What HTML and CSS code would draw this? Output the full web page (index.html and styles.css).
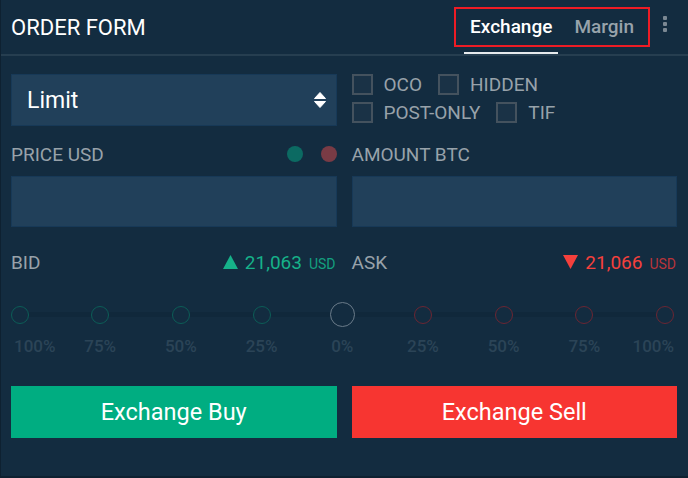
FILE: index.html
```html
<!DOCTYPE html>
<html lang="en">
<head>
  <meta charset="UTF-8">
  <meta name="viewport" content="width=device-width, initial-scale=1.0">
  <title>Order Form</title>
  <link rel="stylesheet" href="styles.css">
</head>
<body>
  <div class="panel">
    <header class="head">
      <h1 class="title">ORDER FORM</h1>
      <nav class="tabs">
        <span class="tab active">Exchange</span>
        <span class="tab">Margin</span>
      </nav>
      <span class="kebab"><i></i><i></i><i></i></span>
    </header>

    <div class="content">
      <!-- order type + flags -->
      <div class="row row-type">
        <div class="select">
          <span>Limit</span>
          <svg class="updown" width="12" height="16" viewBox="0 0 12 16">
            <path d="M6 0.5 L11.5 6.5 H0.5 Z" fill="#fff" stroke="#fff" stroke-linejoin="round"/>
            <path d="M0.5 9.5 H11.5 L6 15.5 Z" fill="#fff" stroke="#fff" stroke-linejoin="round"/>
          </svg>
        </div>
        <div class="flags">
          <div class="flag-line">
            <label class="flag"><span class="box"></span>OCO</label>
            <label class="flag"><span class="box"></span>HIDDEN</label>
          </div>
          <div class="flag-line">
            <label class="flag"><span class="box"></span>POST-ONLY</label>
            <label class="flag"><span class="box"></span>TIF</label>
          </div>
        </div>
      </div>

      <!-- field labels -->
      <div class="row row-labels">
        <div class="field-label">
          <span>PRICE USD</span>
          <span class="dots"><i class="dot teal"></i><i class="dot wine"></i></span>
        </div>
        <div class="field-label"><span>AMOUNT BTC</span></div>
      </div>

      <div class="row row-inputs">
        <input class="field" type="text">
        <input class="field" type="text">
      </div>

      <!-- best bid / ask -->
      <div class="row row-quotes">
        <div class="quote">
          <span>BID</span>
          <span class="price up">
            <svg width="15" height="14" viewBox="0 0 15 14"><path d="M7.5 0 L15 14 H0 Z" fill="#16b189"/></svg>
            <b>21,063</b><small>USD</small>
          </span>
        </div>
        <div class="quote">
          <span>ASK</span>
          <span class="price down">
            <svg width="15" height="14" viewBox="0 0 15 14"><path d="M0 0 H15 L7.5 14 Z" fill="#f5403c"/></svg>
            <b>21,066</b><small>USD</small>
          </span>
        </div>
      </div>

      <!-- amount slider -->
      <div class="ticks">
        <div class="tick buy first"><span class="ring"></span><em>100%</em></div>
        <div class="tick buy"><span class="ring"></span><em>75%</em></div>
        <div class="tick buy"><span class="ring"></span><em>50%</em></div>
        <div class="tick buy"><span class="ring"></span><em>25%</em></div>
        <div class="tick zero"><span class="ring"></span><em>0%</em></div>
        <div class="tick sell"><span class="ring"></span><em>25%</em></div>
        <div class="tick sell"><span class="ring"></span><em>50%</em></div>
        <div class="tick sell"><span class="ring"></span><em>75%</em></div>
        <div class="tick sell last"><span class="ring"></span><em>100%</em></div>
      </div>

      <div class="row row-actions">
        <button class="btn buy">Exchange Buy</button>
        <button class="btn sell">Exchange Sell</button>
      </div>
    </div>
  </div>
</body>
</html>
```

FILE: styles.css
```css
* {
  margin: 0;
  padding: 0;
  box-sizing: border-box;
}

body {
  font-family: Roboto, "Liberation Sans", sans-serif;
  background-color: #0e2131;
  color: #fff;
  width: 688px;
  height: 478px;
  overflow: hidden;
}

.panel {
  width: 688px;
  height: 478px;
  background-color: #132c40;
  border-left: 1px solid #0e2131;
  border-bottom: 2px solid #0e2131;
}

/* header */
.head {
  display: flex;
  align-items: center;
  height: 56px;
  padding: 0 21px 0 10px;
  border-bottom: 2px solid #263e50;
}

.title {
  font-size: 22px;
  font-weight: 400;
  flex: 1;
}

.tabs {
  position: relative;
  display: flex;
  gap: 10px;
  height: 100%;
}

/* red highlight frame round the tab group */
.tabs::after {
  content: "";
  position: absolute;
  top: 7px;
  bottom: 7px;
  left: -10px;
  right: -10px;
  border: 2px solid #ee1c25;
}

.tab {
  display: flex;
  align-items: center;
  padding: 0 6px;
  font-size: 19px;
  font-weight: 500;
  color: #98a3ab;
  border-bottom: 2px solid transparent;
}

.tab.active {
  color: #fff;
  border-bottom-color: #e6eaed;
}

.kebab {
  display: flex;
  flex-direction: column;
  gap: 2px;
  margin-left: 23px;
  margin-bottom: 6px;
}

.kebab i {
  width: 4px;
  height: 4px;
  border-radius: 1px;
  background-color: #7b8893;
}

/* body */
.content {
  padding: 18px 11px 0 10px;
}

.row {
  display: grid;
  grid-template-columns: 1fr 1fr;
  column-gap: 15px;
}

.select {
  display: flex;
  align-items: center;
  justify-content: space-between;
  height: 52px;
  padding: 0 10px 0 15px;
  background-color: #21405a;
  border: 1px solid #173957;
  font-size: 23px;
}

.flags {
  display: flex;
  flex-direction: column;
  gap: 7px;
}

.flag-line {
  display: flex;
  gap: 16px;
}

.flag {
  display: flex;
  align-items: center;
  gap: 11px;
  height: 21px;
  font-size: 19px;
  color: #98a2aa;
}

.box {
  width: 21px;
  height: 21px;
  border: 2px solid #44525e;
  background-color: #1a3246;
}

.row-labels {
  margin-top: 16px;
  height: 24px;
}

.field-label {
  display: flex;
  align-items: center;
  justify-content: space-between;
  font-size: 19px;
  color: #98a2aa;
}

.dots {
  display: flex;
  gap: 18px;
}

.dot {
  width: 16px;
  height: 16px;
  border-radius: 50%;
}

.dot.teal {
  background-color: #0c6a62;
}

.dot.wine {
  background-color: #793b45;
}

.row-inputs {
  margin-top: 10px;
}

.field {
  height: 51px;
  background-color: #21405a;
  border: 1px solid #173957;
  outline: none;
  color: #fff;
}

.row-quotes {
  margin-top: 23px;
  height: 24px;
}

.quote {
  display: flex;
  align-items: center;
  justify-content: space-between;
  font-size: 19px;
  color: #98a2aa;
}

.price {
  display: flex;
  align-items: baseline;
  gap: 7px;
  padding-right: 1px;
}

.price svg {
  align-self: center;
}

.price b {
  font-weight: 400;
  font-size: 19px;
}

.price small {
  font-size: 14px;
}

.price.up b {
  color: #16b189;
}

.price.up small {
  color: #13a07f;
}

.price.down b {
  color: #f5403c;
}

.price.down small {
  color: #b9343a;
}

/* slider ticks */
.ticks {
  display: flex;
  justify-content: space-between;
  margin: 28px 12px 0 -2px;
  padding: 0 0 0 10.5px;
  background: linear-gradient(#10283b, #10283b) 10px 10px / calc(100% - 10px) 5px no-repeat;
}

.tick {
  width: 0;
  display: flex;
  flex-direction: column;
  align-items: center;
}

.ring {
  width: 18px;
  height: 18px;
  margin: 3.5px 0;
  border-radius: 50%;
  border: 1.5px solid #0c5d57;
  background-color: #132c40;
}

.tick.zero .ring {
  width: 25px;
  height: 25px;
  margin: 0;
  border-color: #6a7b89;
}

.tick.sell .ring {
  border-color: #6b2633;
}

.tick em {
  font-style: normal;
  font-size: 17px;
  font-weight: 500;
  line-height: 20px;
  margin-top: 9px;
  color: #2b4457;
  white-space: nowrap;
}

.tick.first em {
  align-self: flex-start;
  margin-left: -5.5px;
}

.tick.last em {
  align-self: flex-end;
  margin-right: -9px;
}

.row-actions {
  margin-top: 30px;
}

.btn {
  height: 52px;
  border: none;
  font-family: Roboto, "Liberation Sans", sans-serif;
  font-size: 23.5px;
  color: #fff;
  cursor: pointer;
}

.btn.buy {
  background-color: #00ad81;
}

.btn.sell {
  background-color: #f73531;
}
```
